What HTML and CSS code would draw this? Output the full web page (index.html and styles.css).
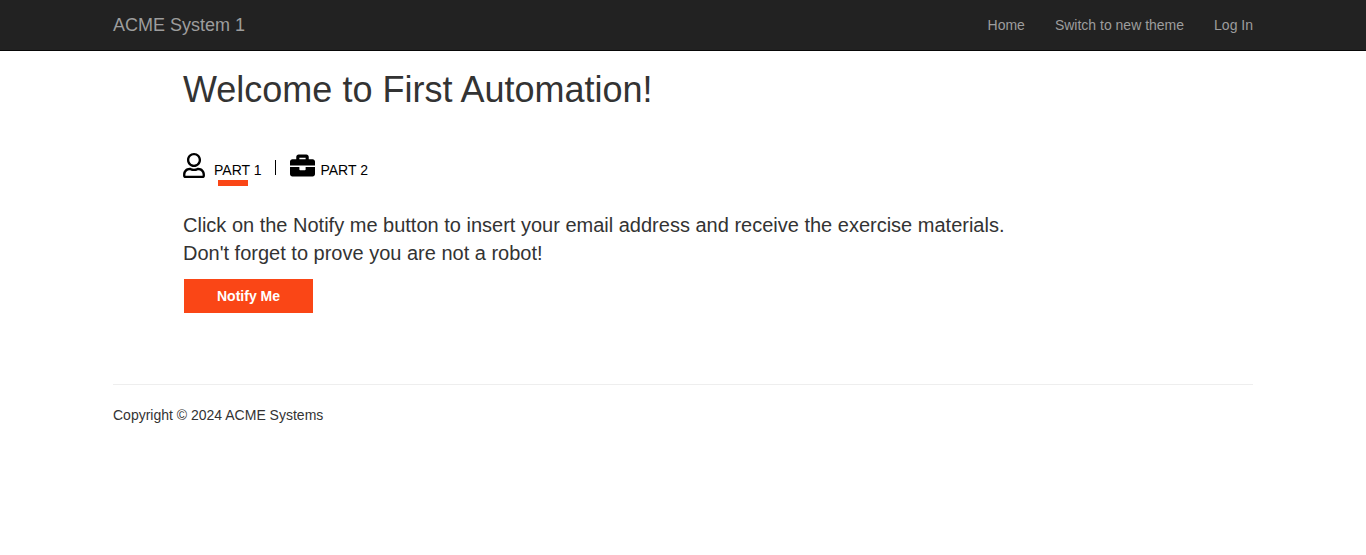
FILE: index.html
```
<!DOCTYPE html>
<html lang="en">
<head>
<meta charset="utf-8">
<title>ACME System 1</title>
<link rel="stylesheet" href="styles.css">
</head>
<body>
<header class="navbar">
  <div class="container navbar-inner">
    <a class="brand" href="#">ACME System 1</a>
    <nav class="nav">
      <a href="#">Home</a>
      <a href="#">Switch to new theme</a>
      <a href="#">Log In</a>
    </nav>
  </div>
</header>
<div class="container">
  <main class="content">
    <h1>Welcome to First Automation!</h1>
    <div class="tabs">
      <a class="tab tab-user active" href="#">
        <svg class="icon-user" viewBox="0 0 448 512" aria-hidden="true"><path d="M313.600 304c-28.700 0-42.500 16-89.600 16-47.100 0-60.800-16-89.600-16C60.200 304 0 364.200 0 438.400V464c0 26.500 21.500 48 48 48h352c26.500 0 48-21.500 48-48v-25.600c0-74.200-60.200-134.400-134.400-134.400zM400 464H48v-25.600c0-47.600 38.800-86.400 86.400-86.400 14.600 0 38.300 16 89.600 16 51.700 0 74.900-16 89.600-16 47.600 0 86.400 38.800 86.400 86.400V464zM224 288c79.500 0 144-64.500 144-144S303.500 0 224 0 80 64.500 80 144s64.500 144 144 144zm0-240c52.900 0 96 43.100 96 96s-43.100 96-96 96-96-43.100-96-96 43.100-96 96-96z"/></svg>
        <span>PART 1</span>
      </a>
      <span class="divider"></span>
      <a class="tab" href="#">
        <svg class="icon-case" viewBox="0 0 512 512" aria-hidden="true"><path d="M320 336c0 8.840-7.160 16-16 16h-96c-8.840 0-16-7.160-16-16v-48H0v144c0 25.600 22.400 48 48 48h416c25.600 0 48-22.400 48-48V288H320v48zm144-208h-80V80c0-25.600-22.400-48-48-48H176c-25.600 0-48 22.400-48 48v48H48c-25.600 0-48 22.400-48 48v80h512v-80c0-25.600-22.400-48-48-48zm-144 0H192V96h128v32z"/></svg>
        <span>PART 2</span>
      </a>
    </div>
    <p class="lead">Click on the Notify me button to insert your email address and receive the exercise materials.<br>Don't forget to prove you are not a robot!</p>
    <button class="notify" type="button">Notify Me</button>
  </main>
  <hr>
  <footer>Copyright © 2024 ACME Systems</footer>
</div>
</body>
</html>
```

FILE: styles.css
```
* { box-sizing: border-box; }
body {
  margin: 0;
  background: #fff;
  color: #333;
  font: 14px/20px "Liberation Sans", Arial, sans-serif;
}
a { color: inherit; text-decoration: none; }
.container {
  max-width: 1170px;
  margin: 0 auto;
  padding: 0 15px;
}
.navbar {
  background: #222;
  border-bottom: 1px solid #080808;
  color: #9d9d9d;
}
.navbar-inner {
  display: flex;
  justify-content: space-between;
  align-items: center;
  height: 50px;
}
.brand { font-size: 18px; }
.nav { display: flex; gap: 30px; }
.content { padding: 19px 70px 0; }
h1 {
  margin: 0;
  font-size: 36px;
  font-weight: 400;
  line-height: 40px;
}
.tabs {
  display: flex;
  align-items: flex-start;
  margin-top: 43px;
  color: #000;
}
.tab {
  display: flex;
  align-items: flex-start;
  gap: 5px;
}
.tab-user { gap: 9px; }
.tab span { padding-top: 7px; }
.tab svg { display: block; height: 25px; fill: currentColor; }
.icon-user { width: 22px; }
.icon-case { width: 25px; }
.active { position: relative; }
.active::after {
  content: "";
  position: absolute;
  left: 35px;
  top: 27px;
  width: 30px;
  height: 6px;
  background: #fa4616;
}
.divider {
  width: 1px;
  height: 15px;
  margin: 7px 14px 0;
  background: #000;
}
.lead {
  margin: 31px 0 0;
  font-size: 20px;
  line-height: 28px;
}
.notify {
  display: block;
  min-width: 129px;
  margin: 12px 0 0 1px;
  padding: 7px 32px;
  border: 0;
  background: #fa4616;
  color: #fff;
  font: bold 14px/20px "Liberation Sans", Arial, sans-serif;
  cursor: pointer;
}
hr {
  margin: 71px 0 20px;
  border: 0;
  border-top: 1px solid #eee;
}
```
